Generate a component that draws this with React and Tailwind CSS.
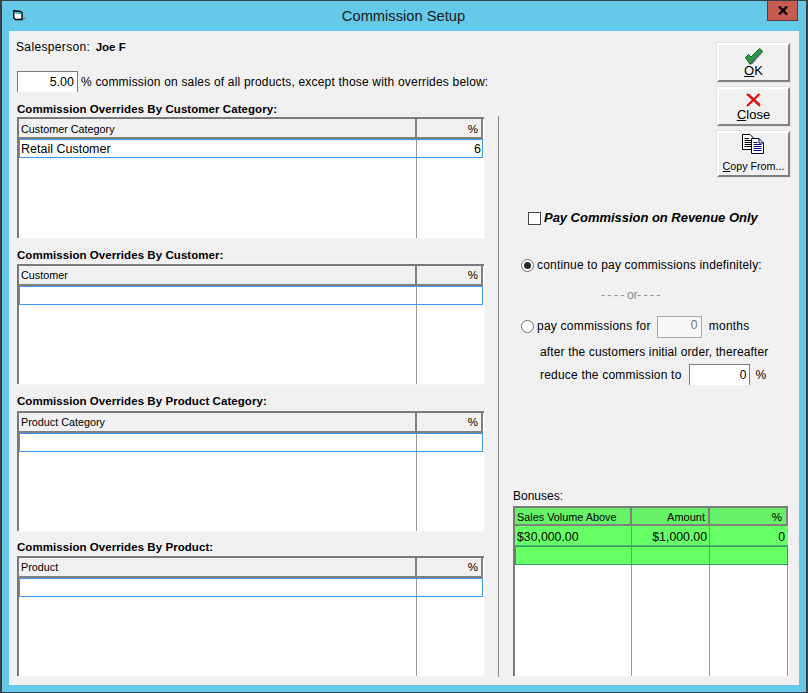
const FONT = "font-['Liberation_Sans',Arial,sans-serif]";

function CheckIcon() {
  return (
    <svg width="18" height="17" viewBox="0 0 18 17" className="block">
      <path d="M.5 9.5 L3.5 6.5 L6 9 L14.5 .5 L17.5 3 L6.5 15.5 L4.5 15.5 Z" fill="#22a834" stroke="#0a5a22" strokeWidth="1" />
      <path d="M2.5 9.5 L6 13 L15 3" fill="none" stroke="#7a3fa0" strokeWidth="1.2" strokeDasharray="1 1" />
      <path d="M4 16 L7 16 L17.5 4" fill="none" stroke="#6a2a90" strokeWidth="1" strokeDasharray="1.5 1" />
    </svg>
  );
}

function CrossIcon() {
  return (
    <svg width="15" height="14" viewBox="0 0 15 14" className="block">
      <path d="M1 1 L14 13 M13.5 1 L1 13" fill="none" stroke="#f00000" strokeWidth="2" />
      <path d="M3 1 L14 11" fill="none" stroke="#a00000" strokeWidth="0.8" />
    </svg>
  );
}

function PagesIcon() {
  return (
    <svg width="23" height="20" viewBox="0 0 23 20" className="block">
      <path d="M.5.5H8L11.5 4V15.5H.5Z" fill="#fff" stroke="#000" />
      <path d="M2.5 4.5H7M2.5 6.5H9.5M2.5 8.5H9.5M2.5 10.5H9.5M2.5 12.5H9.5" stroke="#000" />
      <path d="M9.5 4.5H17L21.5 9V19.5H9.5Z" fill="#fff" stroke="#000050" />
      <path d="M17 4.5V9H21.5" fill="none" stroke="#000050" />
      <path d="M11.5 8.5H15.5M11.5 10.5H19.5M11.5 12.5H19.5M11.5 14.5H19.5M11.5 16.5H19.5" stroke="#000080" />
    </svg>
  );
}

function WindowIcon() {
  return (
    <svg width="13" height="11" viewBox="0 0 13 11" className="block">
      <path d="M.8.8L7 1.5L9 2.5V9.5H2.5L.8 8Z" fill="#fff" stroke="#000" strokeWidth="1.4" />
      <path d="M1.5 2.5L8.5 3.5" stroke="#2aa7a7" strokeWidth="1.4" />
      <path d="M10 8.5H12.5" stroke="#777" strokeWidth="1.4" />
    </svg>
  );
}

function ToolButton({ icon, hotkey, rest, small, className }) {
  return (
    <button className={`flex flex-col items-center w-[73px] bg-[#f0f0f0] border-t-2 border-l-2 border-white border-b-2 border-r-2 border-b-[#808080] border-r-[#808080] outline outline-1 outline-[#e4e4e4] ${className}`}>
      <span className="mt-[1px] h-[20px] flex items-center">{icon}</span>
      <span className={`${small ? 'text-[10.7px] mt-[5px]' : 'text-[13px] -mt-[3px]'} leading-[15px] text-black whitespace-nowrap`}>
        <span className="underline">{hotkey}</span>{rest}
      </span>
    </button>
  );
}

function GridTitle({ title, className }) {
  return <div className={`text-[11.5px] leading-[16px] font-bold tracking-[0.06px] text-black whitespace-nowrap ${className}`}>{title}</div>;
}

function GridTable({ column, value, percent, className, headLeading = 'leading-[18px]', rowLeading = 'leading-[17px]' }) {
  return (
    <div className={`w-[468px] bg-white border border-l-0 border-[#f6f6f6] ${className}`}>
      <div className="flex flex-col h-full border-l-2 border-l-[#7a7a7a] border-t-2 border-t-[#7a7a7a] pr-[1px]">
        <div className="flex h-[20px] bg-[#f0f0f0] border-b-2 border-b-[#808080] shrink-0">
          <div className={`w-[398px] border-r-2 border-r-[#808080] pl-[2px] text-[10.8px] ${headLeading}`}>{column}</div>
          <div className={`flex-1 text-right pr-[3px] text-[11.5px] border-r-2 border-r-[#808080] ${headLeading}`}>%</div>
        </div>
        <div className="flex h-[19px] shrink-0 border border-[#3d97ef]">
          <div className={`w-[397px] border-r border-r-[#999999] pl-[1px] text-[12.5px] ${rowLeading}`}>{value}</div>
          <div className={`flex-1 text-right pr-[1px] text-[12.5px] ${rowLeading}`}>{percent}</div>
        </div>
        <div className="flex flex-1">
          <div className="w-[398px] border-r border-r-[#999999]" />
        </div>
      </div>
    </div>
  );
}

function BonusGrid() {
  return (
    <div className="w-[276px] h-[172px] bg-white border border-l-0 border-[#f6f6f6] mt-[2px]">
      <div className="flex flex-col h-full border-l-2 border-l-[#7a7a7a] border-t-2 border-t-[#7a7a7a]">
        <div className="flex h-[18px] bg-[#66f266] border-b-2 border-b-[#808080] text-[10.85px] leading-[18px] shrink-0">
          <div className="w-[117px] pl-[2px] border-r-2 border-r-[#808080]">Sales Volume Above</div>
          <div className="w-[78px] pr-[3px] text-right border-r-2 border-r-[#808080] text-[11px]">Amount</div>
          <div className="flex-1 pr-[4px] text-right border-r-2 border-r-[#808080] text-[11.5px]">%</div>
        </div>
        <div className="flex h-[20px] bg-[#66ff66] text-[12.3px] leading-[23px] border-b border-b-[#49b266] shrink-0">
          <div className="w-[117px] pl-[2px] border-r border-r-[#49b266]">$30,000.00</div>
          <div className="w-[78px] pr-[2px] text-right border-r border-r-[#49b266]">$1,000.00</div>
          <div className="flex-1 pr-[3px] text-right">0</div>
        </div>
        <div className="flex h-[19px] bg-[#66ff66] border border-[#339966] shrink-0">
          <div className="w-[116px] border-r border-r-[#49b266]" />
          <div className="w-[78px] border-r border-r-[#49b266]" />
        </div>
        <div className="flex flex-1">
          <div className="w-[117px] border-r border-r-[#999999]" />
          <div className="w-[78px] border-r border-r-[#999999]" />
          <div className="flex-1 border-r border-r-[#999999]" />
        </div>
      </div>
    </div>
  );
}

function Radio({ checked, className }) {
  return (
    <span className={`w-[13px] h-[13px] rounded-full border border-[#6e6e6e] bg-white flex items-center justify-center shrink-0 ${className}`}>
      {checked && <span className="w-[7px] h-[7px] rounded-full bg-[#2a2a2a]" />}
    </span>
  );
}

export default function App() {
  return (
    <div className={`${FONT} w-[808px] h-[693px] bg-[#65c9ea] border-x-2 border-y border-[#3a3f44] flex flex-col overflow-hidden text-black`}>
      {/* title bar */}
      <div className="h-[30px] flex items-start shrink-0">
        <div className="ml-[11px] mt-[9px]"><WindowIcon /></div>
        <div className="flex-1 text-center text-[14.7px] leading-[30px] text-[#1a1a1a] pl-[14px]">Commission Setup</div>
        <div className="w-[31px] h-[21px] mr-[8px] -mt-[1px] bg-[#c75b50] border border-[#5c3a36] flex items-center justify-center">
          <svg width="10" height="9" viewBox="0 0 10 9"><path d="M1 .5L9 8.5M9 .5L1 8.5" stroke="#000" strokeWidth="2.4" /></svg>
        </div>
      </div>

      {/* body */}
      <div className="mx-[7px] mb-[7px] flex-1 bg-[#f0f0f0] flex">
        {/* left side */}
        <div className="w-[490px] shrink-0 flex flex-col">
          <div className="pl-[7px] pt-[9px] h-[40px] text-[12px] leading-[14px] tracking-[0.35px]">
            Salesperson:&nbsp; <span className="font-bold tracking-normal text-[11.5px] -ml-[2px]">Joe F</span>
          </div>
          <div className="pl-[8px] flex items-start h-[30px] text-[12px]">
            <div className="w-[61px] h-[21px] bg-white border-t border-x border-[#7a7a7a] text-right pr-[3px] text-[12.5px] leading-[20px]">5.00</div>
            <span className="ml-[3px] leading-[22px] tracking-[0.19px] whitespace-nowrap">% commission on sales of all products, except those with overrides below:</span>
          </div>
          <div className="pl-[8px]"><GridTitle title="Commission Overrides By Customer Category:" className="h-[15px]" /></div>
          <div className="border-r border-r-[#8a8a8a] pl-[8px] flex flex-col">
            <GridTable column="Customer Category" value="Retail Customer" percent="6" className="h-[123px]" headLeading="leading-[20px]" rowLeading="leading-[19px]" />
            <GridTitle title="Commission Overrides By Customer:" className="mt-[8px] h-[16px]" />
            <GridTable column="Customer" className="h-[122px]" />
            <GridTitle title="Commission Overrides By Product Category:" className="mt-[8px] h-[17px]" />
            <GridTable column="Product Category" className="h-[122px]" />
            <GridTitle title="Commission Overrides By Product:" className="mt-[7px] h-[16px]" />
            <GridTable column="Product" className="h-[122px]" />
          </div>
        </div>

        {/* right side */}
        <div className="flex-1 flex flex-col">
          <div className="flex flex-col items-end pr-[9px] pt-[12px] gap-[5px]">
            <ToolButton icon={<CheckIcon />} hotkey="O" rest="K" className="h-[39px]" />
            <ToolButton icon={<CrossIcon />} hotkey="C" rest="lose" className="h-[39px]" />
            <ToolButton icon={<PagesIcon />} hotkey="C" rest="opy From..." small className="h-[46px]" />
          </div>

          <div className="mt-[33px] ml-[29px] flex items-center h-[16px]">
            <span className="w-[13px] h-[13px] bg-white border border-[#444] shrink-0" />
            <span className="ml-[3px] text-[13px] font-bold italic tracking-[-0.03px] whitespace-nowrap">Pay Commission on Revenue Only</span>
          </div>

          <div className="mt-[31px] ml-[22px] flex items-center gap-[3px] h-[16px] text-[12px] tracking-[0.18px] whitespace-nowrap">
            <Radio checked /> continue to pay commissions indefinitely:
          </div>
          <div className="mt-[14px] ml-[102px] text-[12px] leading-[16px] tracking-[-0.4px] text-[#8a8a8a] whitespace-nowrap">- - - - or- - - -</div>
          <div className="mt-[13px] ml-[22px] flex items-center h-[22px] text-[12px] tracking-[0.23px] whitespace-nowrap">
            <Radio className="-mt-[2px]" />
            <span className="ml-[3px] -mt-[2px]">pay commissions for</span>
            <span className="ml-[6px] w-[45px] h-[22px] bg-[#f7f7f7] border border-[#a8a8a8] text-right pr-[3px] leading-[16px] text-[#6d6d6d]">0</span>
            <span className="ml-[7px] -mt-[2px]">months</span>
          </div>
          <div className="mt-[3px] ml-[41px] text-[12px] leading-[22px] tracking-[0.14px] whitespace-nowrap">after the customers initial order, thereafter</div>
          <div className="ml-[41px] mt-[1px] flex items-start h-[22px] text-[12px] tracking-[0.2px] whitespace-nowrap">
            <span className="leading-[22px]">reduce the commission to</span>
            <span className="ml-[7px] w-[61px] h-[21px] bg-white border-t border-x border-[#7a7a7a] text-right pr-[2px] leading-[20px]">0</span>
            <span className="ml-[6px] leading-[22px]">%</span>
          </div>

          <div className="mt-auto ml-[14px] mb-[8px]">
            <div className="text-[12px] leading-[14px]">Bonuses:</div>
            <BonusGrid />
          </div>
        </div>
      </div>
    </div>
  );
}
